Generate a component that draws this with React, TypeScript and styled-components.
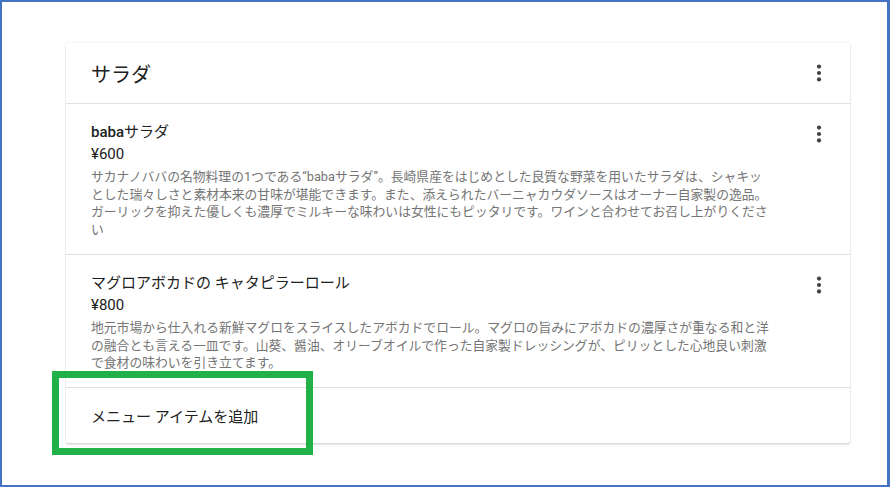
import React from 'react';
import styled, { createGlobalStyle } from 'styled-components';

const GlobalStyle = createGlobalStyle`
  html, body {
    margin: 0;
    padding: 0;
    background: #ffffff;
  }
  body {
    font-family: 'Roboto', 'Noto Sans CJK JP', sans-serif;
    color: #212121;
  }
`;

interface IMenuItem {
  name: string;
  price: string;
  description: string;
}

const ITEMS: IMenuItem[] = [
  {
    name: 'babaサラダ',
    price: '¥600',
    description:
      'サカナノババの名物料理の1つである“babaサラダ”。長崎県産をはじめとした良質な野菜を用いたサラダは、シャキッとした瑞々しさと素材本来の甘味が堪能できます。また、添えられたバーニャカウダソースはオーナー自家製の逸品。ガーリックを抑えた優しくも濃厚でミルキーな味わいは女性にもピッタリです。ワインと合わせてお召し上がりください',
  },
  {
    name: 'マグロアボカドの キャタピラーロール',
    price: '¥800',
    description:
      '地元市場から仕入れる新鮮マグロをスライスしたアボカドでロール。マグロの旨みにアボカドの濃厚さが重なる和と洋の融合とも言える一皿です。山葵、醤油、オリーブオイルで作った自家製ドレッシングが、ピリッとした心地良い刺激で食材の味わいを引き立てます。',
  },
];

const MoreIcon = () => (
  <svg width="24" height="24" viewBox="0 0 24 24" fill="currentColor">
    <circle cx="12" cy="5.6" r="2.1" />
    <circle cx="12" cy="12" r="2.1" />
    <circle cx="12" cy="18.4" r="2.1" />
  </svg>
);

// latin runs get the medium weight, japanese stays regular
const ItemName = ({ text }: { text: string }) => (
  <StyledName>
    {text.split(/([A-Za-z0-9]+)/).map((part, i) =>
      /^[A-Za-z0-9]+$/.test(part) ? <b key={i}>{part}</b> : <span key={i}>{part}</span>
    )}
  </StyledName>
);

const App = () => {
  return (
    <>
      <GlobalStyle />
      <StyledFrame>
        <StyledCard>
          <StyledHeader>
            <h2>サラダ</h2>
            <StyledMore aria-label="more">
              <MoreIcon />
            </StyledMore>
          </StyledHeader>
          {ITEMS.map((item) => (
            <StyledItem key={item.name}>
              <div className="body">
                <ItemName text={item.name} />
                <div className="price">{item.price}</div>
                <p className="desc">{item.description}</p>
              </div>
              <StyledMore aria-label="more" className="item-more">
                <MoreIcon />
              </StyledMore>
            </StyledItem>
          ))}
          <StyledFooter>
            <button>メニュー アイテムを追加</button>
          </StyledFooter>
        </StyledCard>
        <StyledHighlight />
      </StyledFrame>
    </>
  );
};

export default App;

const StyledFrame = styled.div`
  position: relative;
  width: 890px;
  height: 487px;
  box-sizing: border-box;
  padding: 41px 0 0 64px;
  border: 2px solid #4472c4;
  border-right-width: 3px;
  background: #fff;
`;

const StyledCard = styled.section`
  width: 784px;
  background: #fff;
  border-radius: 2px;
  box-shadow: 0 0 2px rgba(0, 0, 0, 0.14), 0 2px 2px rgba(0, 0, 0, 0.12);
`;

const StyledHeader = styled.header`
  height: 60px;
  padding: 0 19px 0 25px;

  display: flex;
  align-items: center;
  justify-content: space-between;

  h2 {
    margin: 0;
    font-size: 20px;
    font-weight: 400;
    color: #212121;
  }
`;

const StyledMore = styled.button`
  width: 24px;
  height: 24px;
  padding: 0;
  border: none;
  background: none;
  color: #424242;
  display: flex;
  cursor: pointer;
`;

const StyledName = styled.div`
  font-size: 15px;
  line-height: 22px;
  font-weight: 400;
  color: #212121;

  b {
    font-weight: 500;
  }
`;

const StyledItem = styled.div`
  display: flex;
  justify-content: space-between;
  padding: 17px 19px 15px 25px;
  border-top: 1px solid #e0e0e0;

  .body {
    width: 680px;
  }
  .price {
    font-size: 15px;
    line-height: 22px;
    color: #212121;
  }
  .desc {
    margin: 3px 0 0;
    font-size: 12.8px;
    line-height: 17.7px;
    color: #757575;
  }
  .item-more {
    margin-top: 1px;
  }
`;

const StyledFooter = styled.div`
  height: 55px;
  padding: 0 25px;
  border-top: 1px solid #e0e0e0;
  display: flex;
  align-items: center;

  button {
    padding: 0;
    border: none;
    background: none;
    font-family: inherit;
    font-size: 15px;
    color: #212121;
    cursor: pointer;
  }
`;

const StyledHighlight = styled.div`
  position: absolute;
  left: 50px;
  top: 369px;
  width: 261px;
  height: 84px;
  box-sizing: border-box;
  border: 7px solid #22b04b;
  pointer-events: none;
`;
